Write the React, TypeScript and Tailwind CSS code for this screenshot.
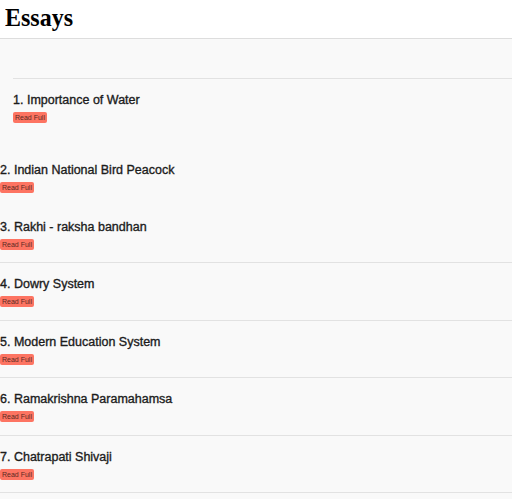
import React from 'react';

// Essay list data
const essays = [
  'Importance of Water',
  'Indian National Bird Peacock',
  'Rakhi - raksha bandhan',
  'Dowry System',
  'Modern Education System',
  'Ramakrishna Paramahamsa',
  'Chatrapati Shivaji',
];

function EssayItem({ index, title, tight }: { index: number; title: string; tight?: boolean }) {
  return (
    <div className={tight ? 'pt-[11px] pb-[12px]' : 'pt-[11px] pb-[13px]'}>
      <h3 className="text-[12.5px] leading-[20px] font-normal text-[#1c1c1c] [-webkit-text-stroke:0.35px_#1c1c1c]">
        {index}. {title}
      </h3>
      <button className="mt-[2px] h-[11px] w-[34px] rounded-[2px] bg-[#fd7462] text-[7px] leading-[11px] text-[#5a2a22] block">
        Read Full
      </button>
    </div>
  );
}

export default function App() {
  return (
    <div className="min-h-[499px] bg-[#f9f9f9] font-['Liberation_Sans',Arial,sans-serif]">
      <header className="h-[39px] bg-white border-b border-[#dddddd]">
        <h1 className="pl-[5px] pt-[2px] text-[24px] leading-[34px] font-bold text-black font-['Liberation_Serif','Times_New_Roman',serif] scale-y-[1.08] origin-bottom">
          Essays
        </h1>
      </header>

      <main>
        <div className="ml-[13px] mt-[39px] mb-[13px] border-t border-[#e2e2e2]">
          <EssayItem index={1} title={essays[0]} />
        </div>

        <EssayItem index={2} title={essays[1]} />

        {essays.slice(2).map((title, i) => (
          <div key={i} className="border-b border-[#e2e2e2]">
            <EssayItem index={i + 3} title={title} tight={i % 2 === 0} />
          </div>
        ))}
      </main>
    </div>
  );
}
